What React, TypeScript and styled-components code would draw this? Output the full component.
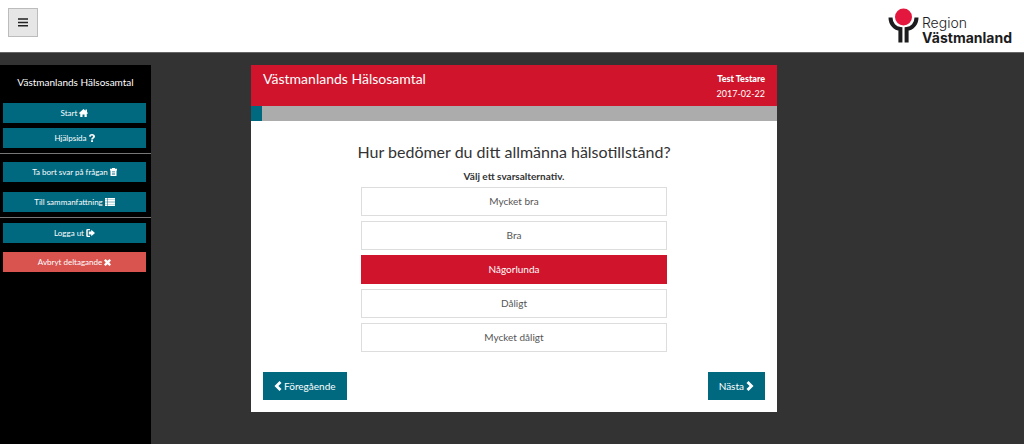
import React, { useState } from "react";
import styled, { createGlobalStyle } from "styled-components";

const GlobalStyle = createGlobalStyle`
  * { box-sizing: border-box; }
  html { min-height: 100%; background: #333333; }
  body { margin: 0; font-family: Lato, Carlito, sans-serif; font-size: 10px; color: #333333; }
  button { font-family: inherit; cursor: pointer; }
`;

const Page = styled.div`
  min-height: 100vh;
  display: flex;
  flex-direction: column;
  background: #333333;
`;

const TopBar = styled.header`
  display: flex;
  justify-content: space-between;
  align-items: flex-start;
  height: 53px;
  padding: 8px 12px 0 8px;
  background: #ffffff;
  border-bottom: 1px solid #666666;
`;

const MenuButton = styled.button`
  display: flex;
  align-items: center;
  justify-content: center;
  width: 30px;
  height: 29px;
  padding: 0;
  border: 1px solid #bcbcbc;
  background: #e6e6e6;
  color: #222222;
`;

const Logo = styled.a`
  display: flex;
  gap: 3px;
  color: #1c1c1e;
  text-decoration: none;
`;

const LogoWords = styled.span`
  display: flex;
  flex-direction: column;
  padding-top: 7px;
  font-family: Inter, sans-serif;
  font-size: 14px;
  line-height: 15px;
  font-weight: 300;
`;

const LogoName = styled.strong`
  font-weight: 700;
`;

const Main = styled.div`
  flex: 1;
  display: grid;
  grid-template-columns: 151px 100fr 526fr 247fr;
  padding-top: 12px;
`;

const Sidebar = styled.nav`
  background: #000000;
  padding-top: 9px;
`;

const SidebarTitle = styled.h2`
  margin: 0 0 12px;
  color: #ffffff;
  font-size: 10px;
  line-height: 17px;
  font-weight: 400;
  text-align: center;
`;

const NavGroup = styled.div<{ $gap: number; $top: number }>`
  display: flex;
  flex-direction: column;
  gap: ${(p) => p.$gap}px;
  padding: ${(p) => p.$top}px 5px 5px 3px;
`;

const Divider = styled.hr`
  height: 1px;
  margin: 0;
  border: 0;
  background: #777777;
`;

const NavButton = styled.button<{ $danger?: boolean }>`
  display: flex;
  align-items: center;
  justify-content: center;
  gap: 2px;
  height: 20px;
  padding: 0;
  border: 0;
  background: ${(p) => (p.$danger ? "#d9534f" : "#006980")};
  color: #ffffff;
  font-size: 8px;
  line-height: 12px;
`;

const Card = styled.main`
  grid-column: 3;
  align-self: start;
  background: #ffffff;
`;

const CardHeader = styled.header`
  display: flex;
  justify-content: space-between;
  height: 41px;
  padding: 6px 12px 0;
  background: #cf142b;
  color: #ffffff;
`;

const CardTitle = styled.h1`
  margin: 0;
  font-size: 14px;
  line-height: 16px;
  font-weight: 400;
`;

const Person = styled.div`
  display: flex;
  flex-direction: column;
  font-size: 9px;
  line-height: 15px;
  text-align: right;
`;

const PersonName = styled.strong`
  font-weight: 900;
`;

const Progress = styled.div`
  height: 15px;
  background: #acacac;
`;

const ProgressFill = styled.div`
  height: 100%;
  background: #006980;
`;

const Survey = styled.form`
  padding: 19px 12px 12px;
`;

const Question = styled.h2`
  margin: 0;
  font-size: 16px;
  line-height: 24px;
  font-weight: 400;
  text-align: center;
`;

const Hint = styled.p`
  margin: 5px 0 4px;
  font-size: 10px;
  line-height: 14px;
  font-weight: 700;
  text-align: center;
`;

const Options = styled.div`
  display: flex;
  flex-direction: column;
  gap: 5px;
  width: 61%;
  margin: 0 auto;
`;

const Option = styled.button<{ $selected: boolean }>`
  height: 29px;
  padding: 0 0 2px;
  border: 1px solid ${(p) => (p.$selected ? "#cf142b" : "#dddddd")};
  background: ${(p) => (p.$selected ? "#cf142b" : "#ffffff")};
  color: ${(p) => (p.$selected ? "#ffffff" : "#555555")};
  font-size: 10px;
  line-height: 12px;
`;

const Steps = styled.div`
  display: flex;
  justify-content: space-between;
  margin-top: 20px;
`;

const StepButton = styled.button`
  display: flex;
  align-items: center;
  gap: 2px;
  height: 28px;
  padding: 0 11px;
  border: 0;
  background: #006980;
  color: #ffffff;
  font-size: 10px;
`;

type IconProps = { d: string; w: number; h: number; box: string };

const Icon = ({ d, w, h, box }: IconProps) => (
  <svg width={w} height={h} viewBox={box} fill="currentColor" fillRule="evenodd" aria-hidden="true">
    <path d={d} />
  </svg>
);

const BarsIcon = () => <Icon w={10} h={9} box="0 0 10 9" d="M0 .3h10v1.500H0zM0 3.700h10v1.500H0zM0 7.100h10v1.500H0z" />;
const HomeIcon = () => (
  <Icon w={9} h={8} box="0 0 18 16" d="M9 0l4 3.600V1h3v5.300L18 8l-1 1.500h-1.500V16H11v-5H7v5H2.500V9.500H1L0 8z" />
);
const QuestionIcon = () => (
  <Icon w={6} h={8} box="0 0 12 16" d="M0 5C0 2 2.500 0 6 0s6 2 6 4.800C12 8 8 8.300 8 11H4.200C4.200 7.500 8 7 8 5c0-1.200-.8-1.800-2-1.800S4 4 4 5.300zM4.200 12.500H8V16H4.200z" />
);
const TrashIcon = () => (
  <Icon w={7} h={8} box="0 0 14 16" d="M4 0h6v1.500h4V5H0V1.500h4zM1 5h12v11H1zM4 7v1.500h6V7zM4 10v1h6v-1zM4 12.500v1h6v-1z" />
);
const ListIcon = () => (
  <Icon w={10} h={8} box="0 0 20 16" d="M0 0h4v3.500H0zM5 0h15v3.500H5zM0 4.200h4v3.500H0zM5 4.200h15v3.500H5zM0 8.400h4v3.500H0zM5 8.400h15v3.500H5zM0 12.500h4V16H0zM5 12.500h15V16H5z" />
);
const LogoutIcon = () => (
  <Icon w={9} h={8} box="0 0 18 16" d="M8 0v2.500H3.500v11H8V16H3q-2.500 0-2.500-2.500v-11Q.5 0 3 0zM10.500 1.500L18 8l-7.500 6.500V11H5.500V5h5z" />
);
const CrossIcon = () => (
  <Icon w={7} h={7} box="0 0 14 14" d="M3 0l4 3.500L11 0l3 3-3.500 4 3.500 4-3 3-4-3.500L3 14l-3-3 3.500-4L0 3z" />
);
const LeftIcon = () => <Icon w={8} h={10} box="0 0 8 10" d="M5.500 0L7.500 1.900 4.400 5l3.100 3.100L5.500 10 .5 5z" />;
const RightIcon = () => <Icon w={8} h={10} box="0 0 8 10" d="M2.500 0L.5 1.900 3.600 5 .5 8.100 2.500 10 7.500 5z" />;

const LogoMark = () => (
  <svg width="31" height="36" viewBox="0 0 31 36" aria-hidden="true">
    <path
      d="M2.500 9.500C2.500 16 7 20.500 12.400 21V34.500M28.500 9.500C28.500 16 24 20.500 18.600 21V34.500"
      fill="none"
      stroke="#1c1c1e"
      strokeWidth="4"
    />
    <circle cx="15.500" cy="9" r="8.500" fill="#e4173e" />
  </svg>
);

const answers = ["Mycket bra", "Bra", "Någorlunda", "Dåligt", "Mycket dåligt"];

export default function App() {
  const [selected, setSelected] = useState("Någorlunda");
  return (
    <Page>
      <GlobalStyle />
      <TopBar>
        <MenuButton type="button" aria-label="Meny"><BarsIcon /></MenuButton>
        <Logo href="#">
          <LogoMark />
          <LogoWords>Region<LogoName>Västmanland</LogoName></LogoWords>
        </Logo>
      </TopBar>
      <Main>
        <Sidebar>
          <SidebarTitle>Västmanlands Hälsosamtal</SidebarTitle>
          <NavGroup $gap={5} $top={0}>
            <NavButton type="button">Start <HomeIcon /></NavButton>
            <NavButton type="button">Hjälpsida <QuestionIcon /></NavButton>
          </NavGroup>
          <Divider />
          <NavGroup $gap={10} $top={8}>
            <NavButton type="button">Ta bort svar på frågan <TrashIcon /></NavButton>
            <NavButton type="button">Till sammanfattning <ListIcon /></NavButton>
          </NavGroup>
          <Divider />
          <NavGroup $gap={9} $top={5}>
            <NavButton type="button">Logga ut <LogoutIcon /></NavButton>
            <NavButton type="button" $danger>Avbryt deltagande <CrossIcon /></NavButton>
          </NavGroup>
        </Sidebar>
        <Card>
          <CardHeader>
            <CardTitle>Västmanlands Hälsosamtal</CardTitle>
            <Person><PersonName>Test Testare</PersonName><span>2017-02-22</span></Person>
          </CardHeader>
          <Progress role="progressbar" aria-label="Framsteg" aria-valuenow={2} aria-valuemin={0} aria-valuemax={100}>
            <ProgressFill style={{ width: "2%" }} />
          </Progress>
          <Survey onSubmit={(e) => e.preventDefault()}>
            <Question>Hur bedömer du ditt allmänna hälsotillstånd?</Question>
            <Hint>Välj ett svarsalternativ.</Hint>
            <Options>
              {answers.map((a) => (
                <Option key={a} type="button" $selected={a === selected} aria-pressed={a === selected} onClick={() => setSelected(a)}>
                  {a}
                </Option>
              ))}
            </Options>
            <Steps>
              <StepButton type="button"><LeftIcon /> Föregående</StepButton>
              <StepButton type="submit">Nästa <RightIcon /></StepButton>
            </Steps>
          </Survey>
        </Card>
      </Main>
    </Page>
  );
}
